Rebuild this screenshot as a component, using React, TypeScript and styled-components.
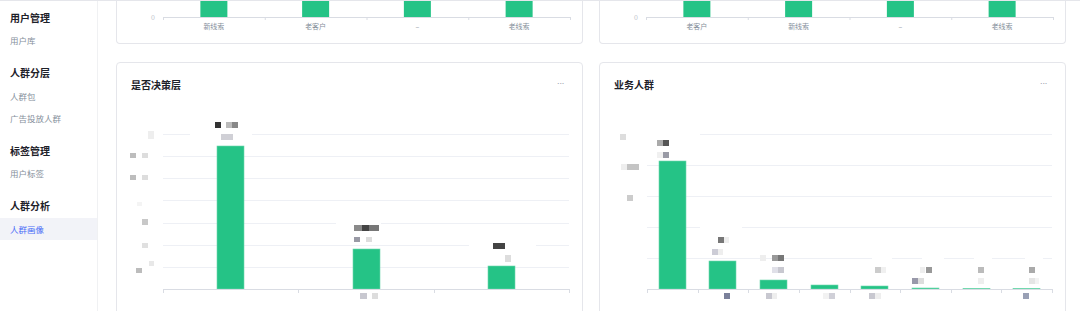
import styled, { createGlobalStyle } from "styled-components";

const GlobalStyle = createGlobalStyle`
  html, body {
    margin: 0;
    padding: 0;
    background: #ffffff;
    overflow: hidden;
  }
  body {
    font-family: "Noto Sans CJK SC", "Noto Sans", sans-serif;
    color: #1d2129;
  }
`;

type Patch = [number, number, number, number, string];
type Box = [number, number, number, number];

const BAR = "#25c386";
const GRID = "#eef0f5";
const AXIS = "#d9dce3";

const menu = [
	{ title: "用户管理", items: ["用户库"] },
	{ title: "人群分层", items: ["人群包", "广告投放人群"] },
	{ title: "标签管理", items: ["用户标签"] },
	{ title: "人群分析", items: ["人群画像"] },
];
const activeItem = "人群画像";

const topCharts = [
	{ labels: ["新线索", "老客户", "–", "老线索"] },
	{ labels: ["老客户", "新线索", "–", "老线索"] },
];

const decisionChart = {
	x0: 46,
	x1: 452,
	grids: [39, 61, 83, 105, 128, 150, 172],
	axis: 194,
	cats: 3,
	tops: [51, 154, 171],
	knockouts: [
		[73, 23, 62, 25],
		[219, 122, 45, 20],
		[352, 144, 67, 18],
	] as Box[],
	patches: [
		[31, 36, 6, 8, "#eeeeee"],
		[13, 58, 6, 5, "#bdbdbd"],
		[25, 58, 6, 5, "#dddddd"],
		[13, 80, 6, 5, "#bdbdbd"],
		[25, 80, 6, 5, "#dddddd"],
		[20, 107, 5, 4, "#f4f4f4"],
		[25, 124, 6, 6, "#c8c8c8"],
		[25, 148, 6, 5, "#e0e0e0"],
		[32, 166, 5, 5, "#e8e8e8"],
		[19, 173, 6, 5, "#bcbcbc"],
		[98, 27, 6, 6, "#333333"],
		[109, 27, 6, 6, "#bbbbbb"],
		[115, 27, 6, 6, "#888888"],
		[104, 39, 12, 6, "#d0d0d6"],
		[237, 130, 8, 6, "#8a8a8a"],
		[245, 130, 7, 6, "#444444"],
		[252, 130, 10, 6, "#777777"],
		[237, 142, 6, 5, "#999aa5"],
		[249, 142, 6, 5, "#dddddd"],
		[376, 148, 12, 6, "#444444"],
		[388, 160, 6, 7, "#dddddd"],
		[243, 198, 7, 6, "#c8c8d0"],
		[255, 198, 6, 6, "#dddddd"],
	] as Patch[],
};

const crowdChart = {
	x0: 47,
	x1: 452,
	grids: [39, 70, 101, 132, 163],
	axis: 194,
	cats: 8,
	tops: [66, 166, 185, 190, 191, 193, 193.5, 193.5],
	knockouts: [
		[47, 33, 53, 12],
		[100, 125, 42, 14],
		[272, 158, 20, 10],
		[322, 158, 22, 10],
		[374, 158, 18, 10],
		[425, 158, 18, 10],
	] as Box[],
	patches: [
		[20, 39, 6, 6, "#dddddd"],
		[21, 69, 6, 6, "#eeeeee"],
		[27, 69, 12, 6, "#c4c4c4"],
		[27, 100, 6, 6, "#cccccc"],
		[57, 45, 6, 6, "#aaaaaa"],
		[63, 45, 6, 6, "#555555"],
		[57, 57, 6, 6, "#f0f0f0"],
		[63, 57, 6, 6, "#999aa5"],
		[118, 142, 6, 6, "#777777"],
		[124, 142, 5, 6, "#eeeeee"],
		[112, 154, 6, 6, "#ccccd6"],
		[118, 154, 5, 6, "#eeeeee"],
		[160, 160, 6, 6, "#eeeeee"],
		[172, 160, 6, 6, "#999999"],
		[178, 160, 6, 6, "#777777"],
		[172, 172, 6, 6, "#e0e0e8"],
		[178, 172, 6, 6, "#c8c8d0"],
		[275, 172, 6, 6, "#cccccc"],
		[281, 172, 5, 6, "#f0f0f0"],
		[320, 172, 5, 6, "#eeeeee"],
		[326, 172, 6, 6, "#999999"],
		[312, 183, 6, 6, "#9999aa"],
		[318, 183, 6, 6, "#dddddd"],
		[378, 172, 6, 6, "#bbbbbb"],
		[378, 183, 6, 6, "#eeeeee"],
		[429, 172, 6, 6, "#aaaaaa"],
		[429, 183, 6, 6, "#e5e5e5"],
		[435, 183, 4, 6, "#f3f3f3"],
		[124, 198, 6, 6, "#7a809a"],
		[166, 198, 6, 6, "#c8c8d0"],
		[172, 198, 5, 6, "#eeeeee"],
		[223, 198, 6, 6, "#f2f2f2"],
		[229, 198, 6, 6, "#d0d0d8"],
		[269, 198, 6, 6, "#c8c8d0"],
		[275, 198, 6, 6, "#eeeeee"],
		[423, 198, 6, 6, "#99a0b5"],
	] as Patch[],
};

const Page = styled.div`
	display: flex;
	height: 310px;
	border-top: 1px solid #e5e6eb;
	overflow: hidden;
`;

const Sidebar = styled.nav`
	width: 97px;
	flex-shrink: 0;
	border-right: 1px solid #f0f1f3;
	padding-top: 5px;
	display: flex;
	flex-direction: column;
	gap: 10.5px;
`;

const MenuGroup = styled.div`
	display: flex;
	flex-direction: column;
`;

const GroupTitle = styled.div`
	height: 22px;
	margin-bottom: 1px;
	padding-left: 10px;
	display: flex;
	align-items: center;
	font-size: 10px;
	font-weight: 700;
	color: #1d2129;
`;

const MenuItem = styled.div<{ $active?: boolean }>`
	height: 22px;
	padding-left: 10px;
	display: flex;
	align-items: center;
	font-size: 8.5px;
	color: ${(p) => (p.$active ? "#4a6cf7" : "#86909c")};
	background: ${(p) => (p.$active ? "#f2f3f8" : "transparent")};
`;

const Main = styled.main`
	flex: 1;
	padding: 0 14px 0 18px;
	display: grid;
	grid-template-columns: 1fr 1fr;
	grid-auto-rows: min-content;
	column-gap: 16px;
	row-gap: 18px;
	overflow: hidden;
`;

const Card = styled.section<{ $clipped?: boolean }>`
	border: 1px solid #e5e6eb;
	border-top: ${(p) => (p.$clipped ? "none" : "1px solid #e5e6eb")};
	border-radius: ${(p) => (p.$clipped ? "0 0 4px 4px" : "4px")};
	background: #ffffff;
	height: ${(p) => (p.$clipped ? "42px" : "auto")};
	overflow: hidden;
`;

const CardHeader = styled.header`
	display: flex;
	justify-content: space-between;
	align-items: center;
	padding: 13px 18px 1px 14px;
	height: 18px;
`;

const CardTitle = styled.h3`
	margin: 0;
	font-size: 10px;
	font-weight: 700;
	color: #1d2129;
	line-height: 18px;
`;

const More = styled.span`
	font-family: "Liberation Sans", sans-serif;
	font-size: 9px;
	letter-spacing: -0.6px;
	color: #9aa0ab;
	line-height: 10px;
	margin-top: -5px;
`;

const ChartSvg = styled.svg`
	display: block;
`;

function TopChart({ labels }: { labels: string[] }) {
	const x0 = 46;
	const x1 = 453;
	const step = (x1 - x0) / labels.length;
	return (
		<ChartSvg width={465} height={42}>
			<text x={38} y={19} fontSize={7} fill="#c0c4cc" textAnchor="end">
				0
			</text>
			{labels.map((l, i) => (
				<rect key={`b${i}`} x={x0 + i * step + step / 2 - 13.5} y={0} width={27} height={16} fill={BAR} />
			))}
			<line x1={x0} x2={x1} y1={16.5} y2={16.5} stroke={AXIS} />
			{Array.from({ length: labels.length + 1 }, (_, i) => (
				<line key={`t${i}`} x1={x0 + i * step + 0.5} x2={x0 + i * step + 0.5} y1={16} y2={19} stroke={AXIS} />
			))}
			{labels.map((l, i) => (
				<text key={`l${i}`} x={x0 + i * step + step / 2} y={28} fontSize={7} fill="#86909c" textAnchor="middle">
					{l}
				</text>
			))}
		</ChartSvg>
	);
}

type BarChartProps = typeof decisionChart;

function BarChart({ x0, x1, grids, axis, cats, tops, knockouts, patches }: BarChartProps) {
	const step = (x1 - x0) / cats;
	return (
		<ChartSvg width={465} height={240}>
			{grids.map((y) => (
				<line key={y} x1={x0} x2={x1} y1={y + 0.5} y2={y + 0.5} stroke={GRID} />
			))}
			{knockouts.map(([x, y, w, h], i) => (
				<rect key={`k${i}`} x={x} y={y} width={w} height={h} fill="#ffffff" />
			))}
			{tops.map((top, i) => (
				<rect
					key={`b${i}`}
					x={Math.round(x0 + i * step + step / 2 - 13.5)}
					y={top}
					width={27}
					height={axis - top}
					fill={BAR}
					stroke="#6fd8ad"
					strokeWidth={0.6}
				/>
			))}
			<line x1={x0} x2={x1} y1={axis + 0.5} y2={axis + 0.5} stroke={AXIS} />
			{Array.from({ length: cats + 1 }, (_, i) => (
				<line
					key={`t${i}`}
					x1={Math.round(x0 + i * step) + 0.5}
					x2={Math.round(x0 + i * step) + 0.5}
					y1={axis}
					y2={axis + 4}
					stroke={AXIS}
				/>
			))}
			{patches.map(([x, y, w, h, c], i) => (
				<rect key={`p${i}`} x={x} y={y} width={w} height={h} fill={c} />
			))}
		</ChartSvg>
	);
}

export default function App() {
	return (
		<>
			<GlobalStyle />
			<Page>
				<Sidebar>
					{menu.map((g) => (
						<MenuGroup key={g.title}>
							<GroupTitle>{g.title}</GroupTitle>
							{g.items.map((item) => (
								<MenuItem key={item} $active={item === activeItem}>
									{item}
								</MenuItem>
							))}
						</MenuGroup>
					))}
				</Sidebar>
				<Main>
					{topCharts.map((c, i) => (
						<Card key={i} $clipped>
							<TopChart labels={c.labels} />
						</Card>
					))}
					<Card>
						<CardHeader>
							<CardTitle>是否决策层</CardTitle>
							<More>···</More>
						</CardHeader>
						<BarChart {...decisionChart} />
					</Card>
					<Card>
						<CardHeader>
							<CardTitle>业务人群</CardTitle>
							<More>···</More>
						</CardHeader>
						<BarChart {...crowdChart} />
					</Card>
				</Main>
			</Page>
		</>
	);
}
